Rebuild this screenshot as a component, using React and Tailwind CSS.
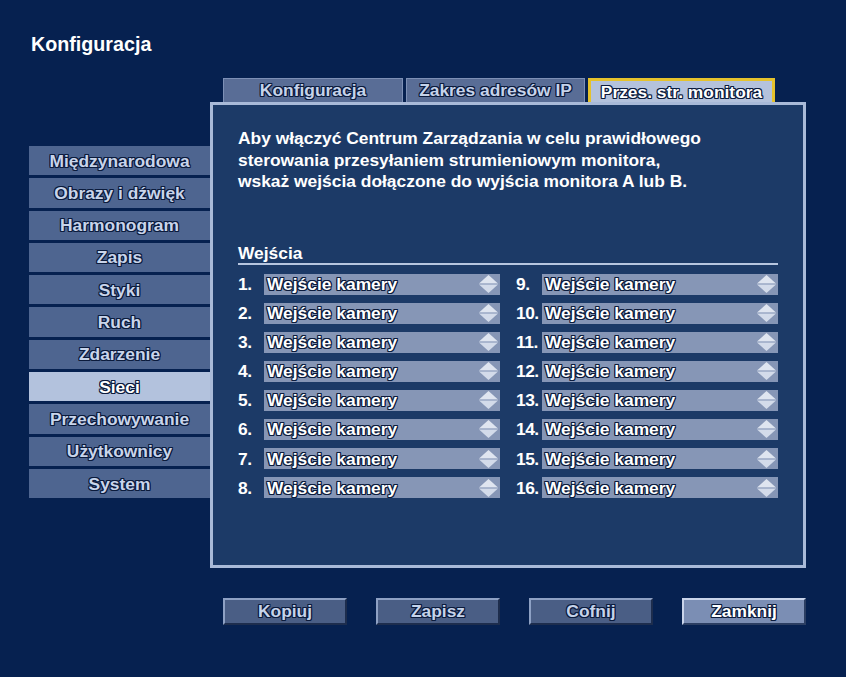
const SIDE = [
  'Międzynarodowa',
  'Obrazy i dźwięk',
  'Harmonogram',
  'Zapis',
  'Styki',
  'Ruch',
  'Zdarzenie',
  'Sieci',
  'Przechowywanie',
  'Użytkownicy',
  'System',
]

const OUTLINE = '[text-shadow:-1px_-1px_0_#0b1b3c,1px_-1px_0_#0b1b3c,-1px_1px_0_#0b1b3c,1px_1px_0_#0b1b3c,0_1px_0_#0b1b3c,1px_0_0_#0b1b3c,-1px_0_0_#0b1b3c,0_-1px_0_#0b1b3c]'

export default function App() {
  return (
    <div className="w-[846px] h-[677px] bg-[#062150] overflow-hidden font-['Liberation_Sans',Arial,sans-serif] font-bold select-none">
      {/* ── Title ─────────────────────────────── */}
      <div className="pl-[31px] pt-[33px] h-[78px]">
        <h1 className="text-[19.7px] leading-[23px] text-white">Konfiguracja</h1>
      </div>

      {/* ── Tabs ──────────────────────────────── */}
      <div className="flex ml-[223px] h-[24px] gap-[3px]">
        <Tab label="Konfiguracja" w="w-[180px]" />
        <Tab label="Zakres adresów IP" w="w-[179px]" />
        <div className="w-[187px] h-[25px] bg-[#b4c2dc] border-[3px] border-b-0 border-[#e5c22c] flex items-center justify-center">
          <span className={`text-[17.4px] text-white ${OUTLINE}`}>Przes. str. monitora</span>
        </div>
      </div>

      {/* ── Body ──────────────────────────────── */}
      <div className="flex">
        <div className="ml-[29px] w-[181px] pt-[44px] flex flex-col gap-[3px]">
          {SIDE.map(s => (
            <div
              key={s}
              className={`h-[29.3px] flex items-center justify-center text-[17.4px] ${s === 'Sieci' ? 'bg-[#b3c2dd] text-white' : 'bg-[#4e6590] text-[#c9d5eb]'} ${OUTLINE}`}
            >
              {s}
            </div>
          ))}
        </div>

        <div className="w-[596px] h-[466px] border-[3px] border-[#a9bad8] bg-[#1c3a67] pl-[25px] pr-[25px] pt-[23px]">
          <p className="text-[17.4px] leading-[21.5px] text-white">
            Aby włączyć Centrum Zarządzania w celu prawidłowego<br />
            sterowania przesyłaniem strumieniowym monitora,<br />
            wskaż wejścia dołączone do wyjścia monitora A lub B.
          </p>

          <div className="mt-[52px] h-[20px] border-b-2 border-[#b7c6e0] flex items-end">
            <span className="text-[17.4px] leading-[19px] text-white">Wejścia</span>
          </div>

          <div className="mt-[9px] grid grid-cols-2 gap-x-[16px] gap-y-[8.1px]">
            {Array.from({ length: 8 }).map((_, r) => (
              [r + 1, r + 9].map(n => <InputRow key={n} n={n} />)
            ))}
          </div>
        </div>
      </div>

      {/* ── Buttons ───────────────────────────── */}
      <div className="flex ml-[223px] mt-[30px] gap-[29px]">
        <Btn label="Kopiuj" />
        <Btn label="Zapisz" />
        <Btn label="Cofnij" />
        <Btn label="Zamknij" active />
      </div>
    </div>
  )
}

function Tab({ label, w }) {
  return (
    <div className={`${w} h-[24px] bg-[#596d96] border-t border-l border-r border-[#7d90b6] flex items-center justify-center`}>
      <span className={`text-[17.4px] text-[#c6d3ea] ${OUTLINE}`}>{label}</span>
    </div>
  )
}

function InputRow({ n }) {
  return (
    <div className="flex items-center h-[21px]">
      <span className="w-[26px] text-[17.4px] text-white shrink-0 tracking-[-0.5px]">{n}.</span>
      <div className="flex-1 h-[21px] bg-[#8696b6] flex items-center justify-between pl-[3px] pr-[1px]">
        <span className={`text-[17.4px] text-white ${OUTLINE}`}>Wejście kamery</span>
        <Spinner />
      </div>
    </div>
  )
}

function Spinner() {
  return (
    <svg width="21" height="20" viewBox="0 0 21 20" aria-hidden="true">
      <polygon points="10.5,1 20,9.5 1,9.5" fill="#dfe5f0" />
      <polygon points="1,10.5 20,10.5 10.5,19" fill="#d3dbea" />
      <line x1="2" y1="10" x2="19" y2="10" stroke="#a3b1cb" strokeWidth="1" />
    </svg>
  )
}

function Btn({ label, active }) {
  return (
    <div
      className={`w-[124px] h-[27px] flex items-center justify-center text-[17.4px] border-2 ${
        active
          ? 'bg-[#7b8eb4] border-t-[#c9d4ea] border-l-[#c9d4ea] border-b-[#2b3e62] border-r-[#2b3e62] text-white'
          : 'bg-[#4a5e85] border-t-[#8ea1c4] border-l-[#8ea1c4] border-b-[#1d2d4d] border-r-[#1d2d4d] text-[#c6d3ea]'
      } ${OUTLINE}`}
    >
      {label}
    </div>
  )
}
